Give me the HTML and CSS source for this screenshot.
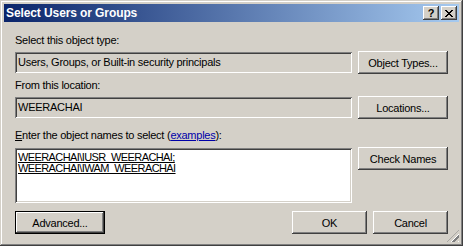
FILE: index.html
```html
<!DOCTYPE html>
<html>
<head>
<meta charset="utf-8">
<link rel="stylesheet" href="styles.css">
</head>
<body>
<div class="window">
  <div class="titlebar">
    <span class="title">Select Users or Groups</span>
    <div class="tbtns">
      <div class="tbtn help">?</div>
      <div class="tbtn close">
        <svg width="8" height="7" viewBox="0 0 8 7"><path d="M0 0h2v1h-2zM6 0h2v1h-2zM1 1h2v1h-2zM5 1h2v1h-2zM2 2h4v1h-4zM3 3h2v1h-2zM2 4h4v1h-4zM1 5h2v1h-2zM5 5h2v1h-2zM0 6h2v1h-2zM6 6h2v1h-2z" fill="#000"/></svg>
      </div>
    </div>
  </div>
  <div class="content">
    <div class="grid">
      <div class="label l1">Select this object type:</div>
      <div class="field ro r2">Users, Groups, or Built-in security principals</div>
      <div class="btn r2b">Object Types...</div>
      <div class="label l2">From this location:</div>
      <div class="field ro r4">WEERACHAI</div>
      <div class="btn r4b">Locations...</div>
      <div class="label l3"><u>E</u>nter the object names to select (<a class="link">examples</a>):</div>
      <div class="field area">
        <div class="name">WEERACHAI\IUSR_WEERACHAI;</div>
        <div class="name">WEERACHAI\IWAM_WEERACHAI</div>
      </div>
      <div class="btn r6b">Check Names</div>
    </div>
    <div class="footer">
      <div class="btn default adv">Advanced...</div>
      <div class="spacer"></div>
      <div class="btn ok">OK</div>
      <div class="btn cancel">Cancel</div>
    </div>
  </div>
  <div class="grip"></div>
</div>
</body>
</html>
```
FILE: styles.css
```css
* { box-sizing: border-box; }
html, body { margin: 0; padding: 0; background: #D4D0C8; }
body { font-family: "Liberation Sans", Arial, sans-serif; font-size: 11px; letter-spacing: -0.25px; color: #000; }
.window {
  position: relative;
  width: 463px; height: 246px;
  background: #D4D0C8;
  padding: 4px;
  box-shadow: inset -1px -1px #404040, inset 1px 1px #D4D0C8, inset -2px -2px #808080, inset 2px 2px #FFFFFF;
  display: flex; flex-direction: column;
}
.titlebar {
  height: 18px;
  background: linear-gradient(to right, #0A246A, #A6CAF0);
  display: flex; align-items: center;
  padding: 0 2px 0 2px;
}
.title { color: #fff; font-weight: bold; font-size: 12px; letter-spacing: -0.1px; flex: 1; line-height: 18px; }
.tbtns { display: flex; gap: 2px; }
.tbtn {
  width: 16px; height: 14px;
  background: #D4D0C8;
  box-shadow: inset -1px -1px #404040, inset 1px 1px #FFFFFF, inset -2px -2px #808080;
  display: flex; align-items: center; justify-content: center;
}
.help { font-weight: bold; font-size: 11px; line-height: 14px; letter-spacing: 0; }
.close svg { display: block; margin-left: -1px; }
.content { padding: 12px 11px 0 11px; }
.grid {
  display: grid;
  grid-template-columns: 337px 90px;
  column-gap: 6px;
  justify-content: space-between;
}
.label { grid-column: 1; line-height: 13px; height: 13px; white-space: nowrap; }
.l2 { margin-top: 5px; }
.l3 { margin-top: 10px; }
.link { color: #0000A8; text-decoration: underline; }
.field {
  grid-column: 1;
  box-shadow: inset 1px 1px #808080, inset -1px -1px #FFFFFF, inset 2px 2px #404040, inset -2px -2px #D4D0C8;
  padding: 2px 3px;
  line-height: 17px;
  white-space: nowrap;
}
.ro { height: 21px; align-self: start; background: #D4D0C8; }
.r2b, .r4b { margin-top: 4px; }
.r2, .r4 { margin-top: 5px; }
.area { background: #fff; height: 55px; margin-top: 6px; padding: 4px 3px; line-height: 11px; align-self: start; }
.name { text-decoration: underline; letter-spacing: -0.6px; }
.btn {
  height: 23px;
  background: #D4D0C8;
  box-shadow: inset -1px -1px #404040, inset 1px 1px #FFFFFF, inset -2px -2px #808080;
  display: flex; align-items: center; justify-content: center;
  white-space: nowrap;
}
.grid .btn { grid-column: 2; align-self: start; }
.r6b { margin-top: 5px; }
.footer { display: flex; margin-top: 8px; gap: 6px; }
.spacer { flex: 1; }
.adv { width: 90px; }
.default { box-shadow: inset 0 0 0 1px #000, inset -2px -2px #404040, inset 2px 2px #FFFFFF, inset -3px -3px #808080; }
.ok { width: 75px; }
.cancel { width: 75px; }
.grip {
  position: absolute; right: 4px; bottom: 4px; width: 12px; height: 12px;
  background: repeating-linear-gradient(135deg, transparent 0 1px, #FFFFFF 1px 2px, #808080 2px 4px, transparent 4px 5px);
  clip-path: polygon(100% 0, 100% 100%, 0 100%);
}
```
